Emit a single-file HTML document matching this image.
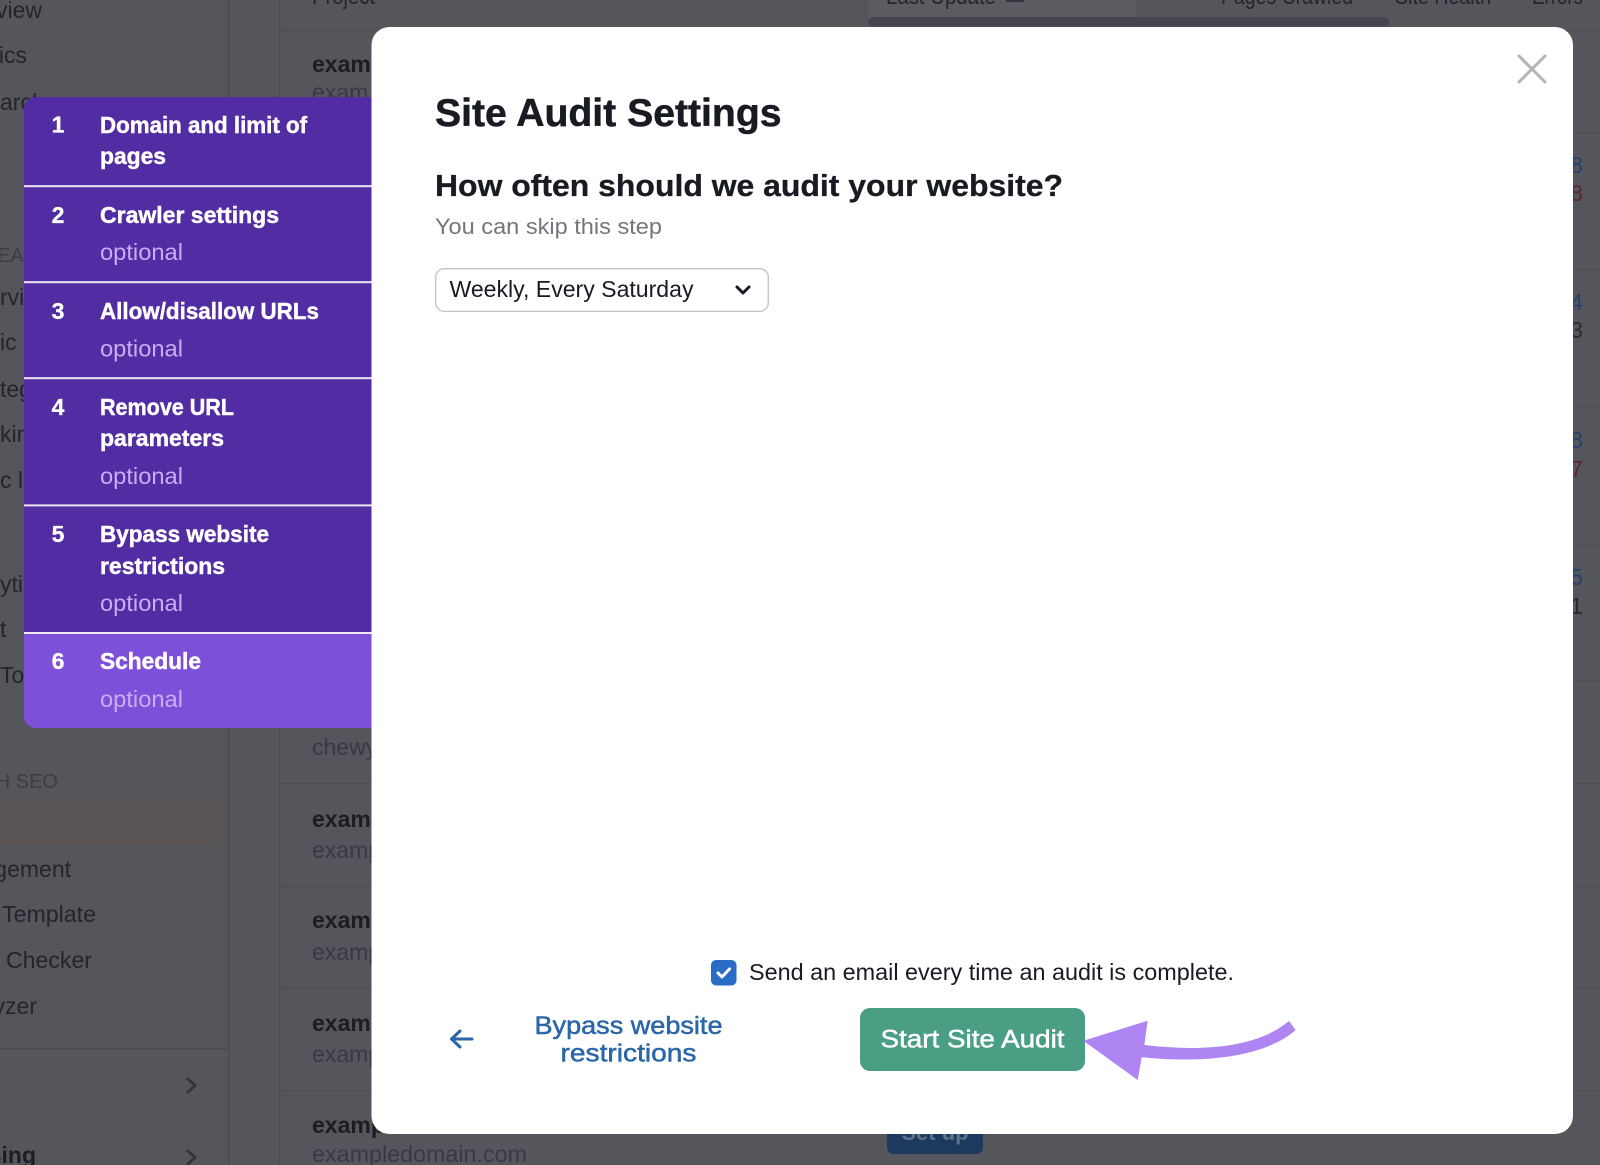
<!DOCTYPE html>
<html lang="en">
<head>
<meta charset="utf-8">
<title>Site Audit Settings</title>
<style>
html,body{margin:0;padding:0;width:1600px;height:1165px;overflow:hidden;background:#55565c}
svg{display:block;position:absolute;left:0;top:0}
text{font-family:"Liberation Sans",Arial,sans-serif}
.n{font-size:23px;fill:#24252b}
.e{font-size:23px;fill:#24252b;text-anchor:end}
.b{font-size:23px;font-weight:700;fill:#1c1d23}
.s{font-size:23px;fill:#393a41}
.h{font-size:20px;fill:#3c3d43}
.w{font-size:23px;font-weight:700;fill:#fff;stroke:#fff;stroke-width:.45px}
.o{font-size:23px;fill:#c9adf3}
.num{font-size:23px;font-weight:700;fill:#fff;text-anchor:middle;stroke:#fff;stroke-width:.3px}
</style>
</head>
<body>
<svg width="1600" height="1165" viewBox="0 0 1600 1165" xmlns="http://www.w3.org/2000/svg">
  <rect width="1600" height="1165" fill="#55565c"/>
  <!-- structure lines -->
  <rect x="228" y="0" width="1.3" height="1165" fill="#4a4b51"/>
  <rect x="279" y="0" width="1.3" height="1165" fill="#4d4e54"/>
  <g fill="#4d4e54">
    <rect x="279" y="30" width="1321" height="1.2"/>
    <rect x="279" y="132" width="1321" height="1.2"/>
    <rect x="279" y="269" width="1321" height="1.2"/>
    <rect x="279" y="406" width="1321" height="1.2"/>
    <rect x="279" y="545" width="1321" height="1.2"/>
    <rect x="279" y="680" width="1321" height="1.2"/>
    <rect x="279" y="783" width="1321" height="1.2"/>
    <rect x="279" y="886" width="1321" height="1.2"/>
    <rect x="279" y="987" width="1321" height="1.2"/>
    <rect x="279" y="1090" width="1321" height="1.2"/>
  </g>
  <rect x="0" y="1048" width="228" height="1.3" fill="#4a4b51"/>
  <rect x="0" y="800" width="220" height="45" fill="#5b5455"/>

  <!-- table header -->
  <rect x="868" y="0" width="268" height="18" fill="#5b5c61"/>
  <rect x="868" y="17" width="521" height="9.5" rx="4.5" fill="#45464e"/>
  <text class="n" x="312" y="4" textLength="63" lengthAdjust="spacingAndGlyphs">Project</text>
  <text class="n" x="886" y="4" textLength="110" lengthAdjust="spacingAndGlyphs">Last Update</text>
  <rect x="1006" y="0" width="18" height="2" fill="#34353c"/>
  <text class="n" x="1221" y="4" textLength="132" lengthAdjust="spacingAndGlyphs">Pages Crawled</text>
  <text class="n" x="1395" y="4" textLength="96" lengthAdjust="spacingAndGlyphs">Site Health</text>
  <text class="n" x="1532" y="4" textLength="51" lengthAdjust="spacingAndGlyphs">Errors</text>

  <!-- sidebar text -->
  <text class="e" x="42" y="18">view</text>
  <text class="e" x="27" y="63">ics</text>
  <text class="n" x="0" y="110">arch</text>
  <text class="h" x="-3" y="262">EAR</text>
  <text class="n" x="0" y="305">rvi</text>
  <text class="n" x="0" y="350">ic</text>
  <text class="n" x="0" y="397">teg</text>
  <text class="n" x="0" y="442">kin</text>
  <text class="n" x="0" y="488">c l</text>
  <text class="n" x="0" y="592">yti</text>
  <text class="n" x="0" y="637">t</text>
  <text class="n" x="0" y="683">To</text>
  <text class="h" x="58" y="788" text-anchor="end">H SEO</text>
  <text class="e" x="71" y="877">gement</text>
  <text class="n" x="2" y="922" textLength="94" lengthAdjust="spacingAndGlyphs">Template</text>
  <text class="n" x="6" y="968" textLength="86" lengthAdjust="spacingAndGlyphs">Checker</text>
  <text class="e" x="37" y="1014">yzer</text>
  <text x="36" y="1163" text-anchor="end" style="font-size:23px;font-weight:700;fill:#1c1d23">sing</text>
  <path d="M187 1078l8 7.5-8 7.5" fill="none" stroke="#33343a" stroke-width="2.6"/>
  <path d="M187 1150l8 7.5-8 7.5" fill="none" stroke="#33343a" stroke-width="2.6"/>

  <!-- table rows -->
  <text class="b" x="312" y="72">exam</text>
  <text class="s" x="312" y="100">exam</text>
  <text class="s" x="312" y="755">chewy</text>
  <text class="b" x="312" y="827">exam</text>
  <text class="s" x="312" y="858">examp</text>
  <text class="b" x="312" y="928">exam</text>
  <text class="s" x="312" y="960">examp</text>
  <text class="b" x="312" y="1031">exam</text>
  <text class="s" x="312" y="1062">examp</text>
  <text class="b" x="312" y="1133">examp</text>
  <text class="s" x="312" y="1162" textLength="215" lengthAdjust="spacingAndGlyphs">exampledomain.com</text>
  <rect x="887" y="1100" width="96" height="54" rx="7" fill="#1c3a5e"/>
  <text x="935" y="1140" text-anchor="middle" style="font-size:22px;font-weight:700;fill:#5d7288">Set up</text>

  <!-- right column numbers -->
  <g style="font-size:23px;text-anchor:end">
    <text x="1583" y="173" fill="#263f6e">8</text>
    <text x="1583" y="201" fill="#5e2335">8</text>
    <text x="1583" y="310" fill="#263f6e">4</text>
    <text x="1583" y="338" fill="#292c31">3</text>
    <text x="1583" y="448" fill="#263f6e">8</text>
    <text x="1583" y="477" fill="#5e2335">7</text>
    <text x="1583" y="585" fill="#263f6e">5</text>
    <text x="1583" y="614" fill="#292c31">1</text>
  </g>

  <!-- step panel -->
  <path d="M24 109a12 12 0 0 1 12-12H372V633H24Z" fill="#512ca2"/>
  <path d="M24 633H372V728H36a12 12 0 0 1-12-12Z" fill="#7e4fd9"/>
  <g fill="#ece6f7">
    <rect x="24" y="185.2" width="348" height="2"/>
    <rect x="24" y="281.2" width="348" height="2"/>
    <rect x="24" y="377.2" width="348" height="2"/>
    <rect x="24" y="504.4" width="348" height="2"/>
    <rect x="24" y="632" width="348" height="2"/>
  </g>

  <text class="num" x="58" y="132.500">1</text>
  <text class="w" x="100" y="133" textLength="207" lengthAdjust="spacingAndGlyphs">Domain and limit of</text>
  <text class="w" x="100" y="164" textLength="66" lengthAdjust="spacingAndGlyphs">pages</text>

  <text class="num" x="58" y="223">2</text>
  <text class="w" x="100" y="223" textLength="179" lengthAdjust="spacingAndGlyphs">Crawler settings</text>
  <text class="o" x="100" y="260" textLength="83" lengthAdjust="spacingAndGlyphs">optional</text>

  <text class="num" x="58" y="319">3</text>
  <text class="w" x="100" y="319" textLength="219" lengthAdjust="spacingAndGlyphs">Allow/disallow URLs</text>
  <text class="o" x="100" y="356.500" textLength="83" lengthAdjust="spacingAndGlyphs">optional</text>

  <text class="num" x="58" y="415">4</text>
  <text class="w" x="100" y="415" textLength="134" lengthAdjust="spacingAndGlyphs">Remove URL</text>
  <text class="w" x="100" y="446" textLength="124" lengthAdjust="spacingAndGlyphs">parameters</text>
  <text class="o" x="100" y="484" textLength="83" lengthAdjust="spacingAndGlyphs">optional</text>

  <text class="num" x="58" y="542">5</text>
  <text class="w" x="100" y="542" textLength="169" lengthAdjust="spacingAndGlyphs">Bypass website</text>
  <text class="w" x="100" y="574" textLength="125" lengthAdjust="spacingAndGlyphs">restrictions</text>
  <text class="o" x="100" y="611" textLength="83" lengthAdjust="spacingAndGlyphs">optional</text>

  <text class="num" x="58" y="669">6</text>
  <text class="w" x="100" y="669" textLength="101" lengthAdjust="spacingAndGlyphs">Schedule</text>
  <text class="o" x="100" y="707" textLength="83" lengthAdjust="spacingAndGlyphs">optional</text>

  <!-- modal -->
  <path d="M371.5 45a18 18 0 0 1 18-18H1555a18 18 0 0 1 18 18V1116a18 18 0 0 1-18 18H389.500a18 18 0 0 1-18-18Z" fill="#fff"/>
  <path d="M1519 56l26 26M1545 56l-26 26" stroke="#b3b3b9" stroke-width="3" stroke-linecap="round" fill="none"/>

  <text x="435" y="126" textLength="346.500" lengthAdjust="spacingAndGlyphs" stroke="#191b23" stroke-width="0.500" style="font-size:39px;font-weight:700;fill:#191b23">Site Audit Settings</text>
  <text x="435" y="196" textLength="628" lengthAdjust="spacingAndGlyphs" stroke="#191b23" stroke-width="0.300" style="font-size:31px;font-weight:700;fill:#191b23">How often should we audit your website?</text>
  <text x="435" y="234" textLength="227" lengthAdjust="spacingAndGlyphs" style="font-size:22.500px;fill:#75767c">You can skip this step</text>

  <rect x="435.700" y="268.700" width="332.600" height="42.600" rx="8.500" fill="#fff" stroke="#c4c5c9" stroke-width="1.400"/>
  <text x="449.500" y="297" textLength="244" lengthAdjust="spacingAndGlyphs" style="font-size:23px;fill:#191b23">Weekly, Every Saturday</text>
  <path d="M737 287l6 6 6-6" fill="none" stroke="#191b23" stroke-width="3" stroke-linecap="round" stroke-linejoin="round"/>

  <rect x="711" y="960" width="25.500" height="25.500" rx="5" fill="#2a6cc5"/>
  <path d="M718 973l4 4 7.500-8" fill="none" stroke="#fff" stroke-width="3" stroke-linecap="round" stroke-linejoin="round"/>
  <text x="749" y="980" textLength="485" lengthAdjust="spacingAndGlyphs" style="font-size:23px;fill:#191b23">Send an email every time an audit is complete.</text>

  <path d="M451.500 1039H472M460 1031l-8.500 8 8.500 8" fill="none" stroke="#2a66a8" stroke-width="3" stroke-linecap="round" stroke-linejoin="round"/>
  <text x="534.500" y="1034" textLength="188" lengthAdjust="spacingAndGlyphs" stroke="#2a66a8" stroke-width="0.500" style="font-size:25px;fill:#2a66a8">Bypass website</text>
  <text x="560.500" y="1061.500" textLength="136" lengthAdjust="spacingAndGlyphs" stroke="#2a66a8" stroke-width="0.500" style="font-size:25px;fill:#2a66a8">restrictions</text>

  <rect x="860" y="1008" width="225" height="63" rx="10" fill="#4a9e83"/>
  <text x="880.500" y="1047.500" textLength="184" lengthAdjust="spacingAndGlyphs" stroke="#fff" stroke-width="0.500" style="font-size:25px;fill:#fff">Start Site Audit</text>

  <path d="M1083.300 1040.700L1147.700 1020.700L1144.300 1045C1200 1051.700 1256.700 1048.300 1289 1021L1295.700 1030C1263.300 1058.300 1200 1063.300 1141.700 1057.300L1137.700 1080Z" fill="#ae85f2"/>
</svg>
</body>
</html>
